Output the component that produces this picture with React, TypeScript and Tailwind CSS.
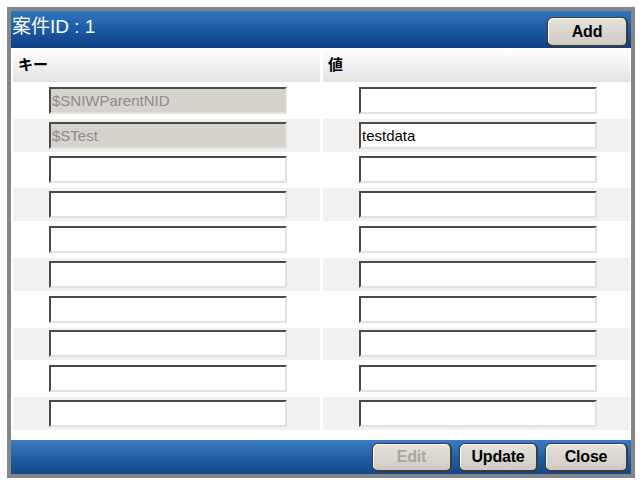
import React from 'react';

type Row = { key: string; value: string; locked: boolean };

const rows: Row[] = [
  { key: '$SNIWParentNID', value: '', locked: true },
  { key: '$STest', value: 'testdata', locked: true },
  ...Array.from({ length: 8 }, () => ({ key: '', value: '', locked: false })),
];

const font = { fontFamily: '"Liberation Sans", "Noto Sans CJK JP", sans-serif' };

function Field({ text, locked }: { text: string; locked?: boolean }) {
  return (
    <div
      className={
        'flex h-[27px] w-[238px] items-center border-2 border-t-[#4a4a4a] border-l-[#4a4a4a] border-b-[#e4e1dc] border-r-[#e4e1dc] px-[1px] text-[15px] leading-none ' +
        (locked ? 'bg-[#d6d3cc] text-[#8c8c8c]' : 'bg-white text-black')
      }
    >
      {text}
    </div>
  );
}

function Btn({ label, w, disabled }: { label: string; w: string; disabled?: boolean }) {
  return (
    <button
      className={
        'flex items-center justify-center rounded-[6px] border border-b-2 border-r-2 border-[#3c3c3c] bg-gradient-to-b from-[#e6e3dd] to-[#cfcbc3] text-[16px] font-bold tracking-[-0.2px] shadow-[inset_1px_1px_0_#ffffff] ' +
        w +
        (disabled ? ' text-[#a8a6a0]' : ' text-black')
      }
    >
      {label}
    </button>
  );
}

export default function App() {
  return (
    <div className="h-[484px] w-[643px] bg-white pl-[7px] pt-[7px]" style={font}>
      <div className="flex h-[471px] w-[628px] flex-col border-4 border-[#858585] bg-white">
        <div className="flex h-[37px] items-start justify-between bg-gradient-to-b from-[#3176c0] via-[#1c5aa3] to-[#0d3f84] pl-[1px] pr-[3px]">
          <span className="mt-[6px] text-[19px] leading-none text-white">案件ID : 1</span>
          <div className="mt-[6px]">
            <Btn label="Add" w="h-[30px] w-[81px]" />
          </div>
        </div>

        <div className="flex flex-1 flex-col gap-y-[2px] pl-[2px] pr-[1px] pt-[1px]">
          <div className="grid grid-cols-2 gap-x-[3px]">
            <div className="flex h-[33px] items-center bg-gradient-to-b from-[#ffffff] to-[#e2e2e2] pl-[5px] text-[15px] font-bold text-black">
              キー
            </div>
            <div className="flex h-[33px] items-center bg-gradient-to-b from-[#ffffff] to-[#e2e2e2] pl-[5px] text-[15px] font-bold text-black">
              値
            </div>
          </div>
          {rows.map((r, i) => (
            <div key={i} className="grid grid-cols-2 gap-x-[3px]">
              <div className={'flex h-[32.8px] items-center justify-center pl-[3px] ' + (i % 2 === 1 ? 'bg-[#f1f1f1]' : 'bg-white')}>
                <Field text={r.key} locked={r.locked} />
              </div>
              <div className={'flex h-[32.8px] items-center justify-center pl-[3px] ' + (i % 2 === 1 ? 'bg-[#f1f1f1]' : 'bg-white')}>
                <Field text={r.value} />
              </div>
            </div>
          ))}
        </div>

        <div className="flex h-[34px] items-center justify-end gap-[7px] bg-gradient-to-b from-[#3a7cc4] via-[#225fa6] to-[#124789] pr-[3px]">
          <Btn label="Edit" w="h-[29px] w-[80px]" disabled />
          <Btn label="Update" w="h-[29px] w-[79px]" />
          <Btn label="Close" w="h-[29px] w-[83px]" />
        </div>
      </div>
    </div>
  );
}
